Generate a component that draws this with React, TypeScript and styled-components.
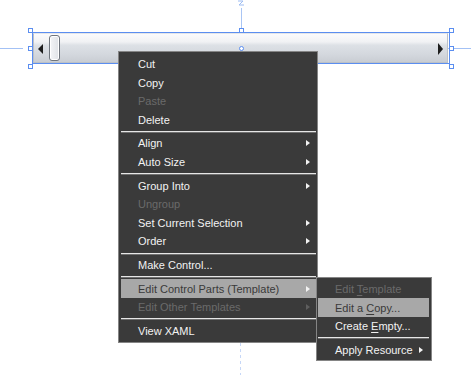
import React from "react";
import styled, { createGlobalStyle } from "styled-components";

const GlobalStyle = createGlobalStyle`
  html, body {
    margin: 0;
    padding: 0;
    background: #ffffff;
  }
`;

interface IMenuItem {
  label: string;
  accessKey?: number;
  disabled?: boolean;
  sub?: boolean;
  active?: boolean;
  separator?: boolean;
}

const mainItems: IMenuItem[] = [
  { label: "Cut" },
  { label: "Copy" },
  { label: "Paste", disabled: true },
  { label: "Delete" },
  { label: "", separator: true },
  { label: "Align", sub: true },
  { label: "Auto Size", sub: true },
  { label: "", separator: true },
  { label: "Group Into", sub: true },
  { label: "Ungroup", disabled: true },
  { label: "Set Current Selection", sub: true },
  { label: "Order", sub: true },
  { label: "", separator: true },
  { label: "Make Control..." },
  { label: "", separator: true },
  { label: "Edit Control Parts (Template)", sub: true, active: true },
  { label: "Edit Other Templates", sub: true, disabled: true },
  { label: "", separator: true },
  { label: "View XAML" },
];

const subItems: IMenuItem[] = [
  { label: "Edit Template", accessKey: 5, disabled: true },
  { label: "Edit a Copy...", accessKey: 7, active: true },
  { label: "Create Empty...", accessKey: 7 },
  { label: "", separator: true },
  { label: "Apply Resource", sub: true },
];

const renderLabel = (item: IMenuItem) => {
  if (item.accessKey === undefined) return item.label;
  const i = item.accessKey;
  return (
    <>
      {item.label.slice(0, i)}
      <u>{item.label[i]}</u>
      {item.label.slice(i + 1)}
    </>
  );
};

const MenuList = ({ items }: { items: IMenuItem[] }) => (
  <>
    {items.map((item, idx) =>
      item.separator ? (
        <Separator key={idx} />
      ) : (
        <Item key={idx} active={item.active} disabled={item.disabled}>
          <Label>{renderLabel(item)}</Label>
          {item.sub && <SubArrow disabled={item.disabled} />}
        </Item>
      )
    )}
  </>
);

// selection adorner: 8 resize handles + rotation origin round the scrollbar
const Adorner = () => (
  <AdornerBox>
    <HandleRow>
      <Handle />
      <Handle />
      <Handle />
    </HandleRow>
    <HandleRow>
      <Handle />
      <Origin />
      <Handle />
    </HandleRow>
    <HandleRow>
      <Handle />
      <Handle />
      <Handle />
    </HandleRow>
  </AdornerBox>
);

export default function App() {
  return (
    <Canvas>
      <GlobalStyle />
      <ScrollTrack>
        <ArrowLeft />
        <Thumb />
        <Spacer />
        <ArrowRight />
      </ScrollTrack>

      <GuideTop>
        <svg width="8" height="6" viewBox="0 0 8 6">
          <path d="M1 1 H6 L2 5 H7" fill="none" stroke="#9dbcf2" strokeWidth="1" />
        </svg>
        <GuideLineV />
      </GuideTop>
      <GuideH>
        <GuideSeg />
        <GuideGap />
        <GuideSeg />
      </GuideH>
      <Adorner />
      <DashedGuide />

      <MainMenu>
        <MenuList items={mainItems} />
      </MainMenu>
      <SubMenu>
        <MenuList items={subItems} />
      </SubMenu>
    </Canvas>
  );
}

const Canvas = styled.div`
  position: relative;
  width: 471px;
  height: 375px;
  overflow: hidden;
  box-sizing: border-box;
  padding: 33px 0 0 33px;
  font-family: "Liberation Sans", Arial, sans-serif;
`;

const ScrollTrack = styled.div`
  width: 415px;
  height: 30px;
  box-sizing: border-box;
  border: 1px solid #bcc1c7;
  border-top-color: #e4e6e9;
  background: linear-gradient(
    #fbfbfc 0%,
    #f1f2f4 28%,
    #dde1e6 40%,
    #d3d7dd 75%,
    #c9cdd3 100%
  );
  display: flex;
  align-items: center;
  padding: 0 4px 0 4px;
`;

const ArrowLeft = styled.div`
  width: 0;
  height: 0;
  border-top: 5px solid transparent;
  border-bottom: 5px solid transparent;
  border-right: 5px solid #1e1e1e;
  margin-top: 2px;
`;

const ArrowRight = styled.div`
  width: 0;
  height: 0;
  border-top: 6px solid transparent;
  border-bottom: 6px solid transparent;
  border-left: 5px solid #1e1e1e;
  margin-top: 2px;
`;

const Thumb = styled.div`
  width: 11px;
  height: 26px;
  box-sizing: border-box;
  margin-left: 6px;
  border: 1px solid #6f757d;
  border-radius: 3px;
  background: linear-gradient(90deg, #f4f5f7, #dfe2e6);
  box-shadow: inset 0 0 0 1px #ffffff;
`;

const Spacer = styled.div`
  flex: 1;
`;

const AdornerBox = styled.div`
  position: absolute;
  left: 28px;
  top: 28px;
  width: 426px;
  height: 41px;
  display: flex;
  flex-direction: column;
  justify-content: space-between;
  &::before {
    content: "";
    position: absolute;
    left: 4px;
    top: 4px;
    right: 4px;
    bottom: 5px;
    border: 1px solid #5b8ef0;
  }
`;

const HandleRow = styled.div`
  position: relative;
  display: flex;
  justify-content: space-between;
  align-items: center;
  height: 5px;
`;

const Handle = styled.div`
  width: 5px;
  height: 5px;
  box-sizing: border-box;
  border: 1px solid #5b8ef0;
  background: #ffffff;
`;

const Origin = styled(Handle)`
  border-radius: 50%;
`;

const GuideTop = styled.div`
  position: absolute;
  left: 237px;
  top: 0;
  width: 8px;
  height: 28px;
  display: flex;
  flex-direction: column;
  align-items: center;
  svg {
    display: block;
  }
`;

const GuideLineV = styled.div`
  flex: 1;
  width: 1px;
  margin-top: 2px;
  background: #a9c5f4;
`;

const GuideH = styled.div`
  position: absolute;
  left: 0;
  right: 0;
  top: 48px;
  height: 1px;
  display: flex;
`;

const GuideSeg = styled.div`
  flex: 1;
  background: #a3c1f5;
`;

const GuideGap = styled.div`
  width: 425px;
  flex: none;
`;

const DashedGuide = styled.div`
  position: absolute;
  left: 240px;
  top: 343px;
  width: 1px;
  height: 32px;
  background: repeating-linear-gradient(
    #c6d7f7 0px,
    #c6d7f7 3px,
    transparent 3px,
    transparent 6px
  );
`;

const MenuBox = styled.div`
  position: absolute;
  box-sizing: border-box;
  background: #3a3a3a;
  border: 1px solid #858585;
  color: #f2f2f2;
  font-size: 11px;
  display: flex;
  flex-direction: column;
`;

const MainMenu = styled(MenuBox)`
  left: 118px;
  top: 51px;
  width: 200px;
  height: 292px;
  padding: 2.7px 1px 2px 2px;
`;

const SubMenu = styled(MenuBox)`
  left: 316px;
  top: 277px;
  width: 116px;
  height: 84px;
  padding: 1.7px 2px 0 1px;
`;

const Item = styled.div<{ active?: boolean; disabled?: boolean }>`
  height: 18.6px;
  display: flex;
  align-items: center;
  padding: 0 6px 0 17px;
  white-space: nowrap;
  background: ${({ active }) => (active ? "#a8a8a8" : "transparent")};
  color: ${({ active, disabled }) =>
    disabled ? "#6a6a6a" : active ? "#3a3a3a" : "#f2f2f2"};
`;

const Label = styled.span`
  flex: 1;
  u {
    text-decoration-thickness: 1px;
    text-underline-offset: 2px;
  }
`;

const SubArrow = styled.span<{ disabled?: boolean }>`
  width: 0;
  height: 0;
  border-top: 3.5px solid transparent;
  border-bottom: 3.5px solid transparent;
  border-left: 4px solid ${({ disabled }) => (disabled ? "#5e5e5e" : "#f2f2f2")};
`;

const Separator = styled.div`
  height: 5px;
  display: flex;
  align-items: center;
  &::after {
    content: "";
    flex: 1;
    height: 1px;
    background: #e6e6e6;
    box-shadow: 0 1px 0 #707070;
  }
`;
